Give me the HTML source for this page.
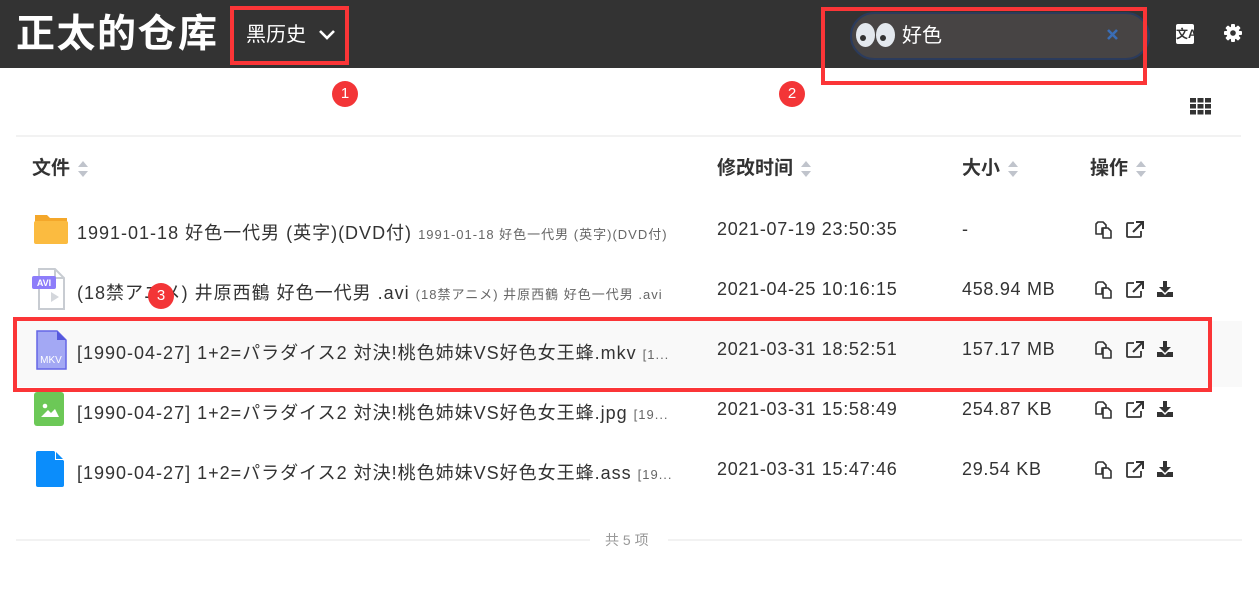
<!DOCTYPE html>
<html><head><meta charset="utf-8"><style>
*{margin:0;padding:0;box-sizing:border-box}
body{width:1259px;height:594px;background:#fff;font-family:"Liberation Sans","Noto Sans CJK SC",sans-serif;position:relative;overflow:hidden;color:#333}
.a{position:absolute;white-space:nowrap}
.hdr{position:absolute;left:0;top:0;width:1259px;height:68px;background:#333}
.red{position:absolute;border:4px solid #fb3537}
.badge{position:absolute;width:26px;height:26px;border-radius:50%;background:#f33537;color:#fff;font-size:15px;text-align:center;line-height:26px}
.th{font-size:19px;font-weight:bold;color:#333}
.sort{display:inline-block;vertical-align:middle;margin-left:8px;width:10px;height:18px;position:relative}
.sort:before{content:"";position:absolute;top:1px;left:0;border:5px solid transparent;border-bottom:6px solid #c0c4cc;border-top:0}
.sort:after{content:"";position:absolute;bottom:1px;left:0;border:5px solid transparent;border-top:6px solid #c0c4cc;border-bottom:0}
.nm{font-size:18px;color:#333;letter-spacing:1px}
.nm small{font-size:13px;color:#666;letter-spacing:1px}
.dt,.sz{font-size:18px;color:#333;letter-spacing:0.7px}
</style></head><body>
<div class="hdr"></div>
<div class="a" style="left:16px;top:12px;font-size:39px;font-weight:bold;color:#fff;line-height:46px;letter-spacing:1.5px">正太的仓库</div>
<div class="a" style="left:246px;top:22px;font-size:20px;color:#fff;line-height:26px">黑历史</div>
<svg class="a" style="left:318px;top:28px" width="18" height="14" viewBox="0 0 18 14"><path d="M2 3 L9 10 L16 3" stroke="#fff" stroke-width="2.6" fill="none"/></svg>
<div class="red" style="left:230px;top:6px;width:119px;height:59px"></div>

<div class="a" style="left:850px;top:12px;width:300px;height:48px;border-radius:24px;background:#474444;border:2px solid #2b3b5c"></div>
<div class="a" style="left:856px;top:23px;width:19px;height:24px;border-radius:50%;background:#e3e8ee"></div>
<div class="a" style="left:876px;top:23px;width:19px;height:24px;border-radius:50%;background:#e3e8ee"></div>
<div class="a" style="left:860px;top:35px;width:6px;height:6px;border-radius:50%;background:#333"></div>
<div class="a" style="left:880px;top:35px;width:6px;height:6px;border-radius:50%;background:#333"></div>
<div class="a" style="left:902px;top:23px;font-size:20px;color:#fff;line-height:26px">好色</div>
<svg class="a" style="left:1106px;top:28px" width="13" height="13" viewBox="0 0 13 13"><path d="M2 2L11 11M11 2L2 11" stroke="#3a6db5" stroke-width="2.6"/></svg>
<div class="red" style="left:821px;top:7px;width:326px;height:78px"></div>
<div class="a" style="left:1176px;top:24px;width:18px;height:20px;background:#fff;border-radius:2px;font-size:12px;font-weight:bold;color:#333;text-align:center;line-height:20px">文A</div>
<svg class="a" style="left:1223px;top:23px" width="20" height="20" viewBox="0 0 20 20"><g fill="#fff"><circle cx="10" cy="10" r="6.5"/><rect x="8" y="1" width="4" height="18" rx="1"/><rect x="1" y="8" width="18" height="4" rx="1"/><rect x="8" y="1" width="4" height="18" rx="1" transform="rotate(45 10 10)"/><rect x="8" y="1" width="4" height="18" rx="1" transform="rotate(-45 10 10)"/></g><circle cx="10" cy="10" r="2.8" fill="#333"/></svg>

<div class="badge" style="left:332px;top:81px">1</div>
<div class="badge" style="left:779px;top:81px">2</div>
<svg class="a" style="left:1190px;top:98px" width="21" height="17" viewBox="0 0 21 17"><g fill="#333"><rect x="0" y="0" width="6" height="4.5"/><rect x="7.5" y="0" width="6" height="4.5"/><rect x="15" y="0" width="6" height="4.5"/><rect x="0" y="6" width="6" height="4.5"/><rect x="7.5" y="6" width="6" height="4.5"/><rect x="15" y="6" width="6" height="4.5"/><rect x="0" y="12" width="6" height="4.5"/><rect x="7.5" y="12" width="6" height="4.5"/><rect x="15" y="12" width="6" height="4.5"/></g></svg>

<div class="a" style="left:16px;top:135px;width:1225px;height:2px;background:#f2f2f2"></div>
<div class="a th" style="left:32px;top:153px">文件<span class="sort"></span></div>
<div class="a th" style="left:717px;top:153px">修改时间<span class="sort"></span></div>
<div class="a th" style="left:962px;top:153px">大小<span class="sort"></span></div>
<div class="a th" style="left:1090px;top:153px">操作<span class="sort"></span></div>

<div class="a" style="left:13px;top:321px;width:1229px;height:66px;background:#f9f9f9"></div>

<svg class="a" style="left:33px;top:213px" width="36" height="32" viewBox="0 0 36 32"><path d="M2 2h12l3 3h17v25H2z" fill="#f4a72a"/><rect x="1" y="8" width="34" height="23" rx="2" fill="#fbbb40"/></svg>
<svg class="a" style="left:30px;top:268px" width="36" height="42" viewBox="0 0 36 42"><path d="M9 1h16l9 9v31H9z" fill="#fff" stroke="#c8ccd2" stroke-width="2"/><path d="M25 1v9h9" fill="none" stroke="#c8ccd2" stroke-width="2"/><path d="M21 24v10l8-5z" fill="#d4d7dc"/><rect x="2" y="8" width="24" height="13" rx="2" fill="#8d7dfa"/><text x="14" y="18" font-size="9" font-family="Liberation Sans" font-weight="bold" fill="#fff" text-anchor="middle">AVI</text></svg>
<svg class="a" style="left:35px;top:330px" width="32" height="40" viewBox="0 0 32 40"><path d="M2 1h20l9 9v29H2z" fill="#a3a8f4" stroke="#6466e6" stroke-width="1.5"/><path d="M22 1v9h9z" fill="#5558dd"/><text x="16" y="33" font-size="10" font-family="Liberation Sans" fill="#fff" text-anchor="middle">MKV</text></svg>
<svg class="a" style="left:33px;top:391px" width="32" height="36" viewBox="0 0 32 36"><rect x="1" y="1" width="30" height="34" rx="3" fill="#6cc857"/><circle cx="12" cy="15" r="2.3" fill="#fff"/><path d="M8 26l7-7 3 3 4-4 4 8z" fill="#fff"/></svg>
<svg class="a" style="left:35px;top:450px" width="30" height="38" viewBox="0 0 30 38"><path d="M3 1h16l10 10v24a2 2 0 0 1-2 2H3a2 2 0 0 1-2-2V3a2 2 0 0 1 2-2z" fill="#0b8dfb"/><path d="M20 1v9h9z" fill="#fff"/><path d="M21 2v7h7z" fill="#0b8dfb"/></svg>

<div class="a nm" style="left:77px;top:219px">1991-01-18 好色一代男 (英字)(DVD付) <small>1991-01-18 好色一代男 (英字)(DVD付)</small></div>
<div class="a nm" style="left:77px;top:279px">(18禁アニメ) 井原西鶴 好色一代男 .avi <small>(18禁アニメ) 井原西鶴 好色一代男 .avi</small></div>
<div class="a nm" style="left:77px;top:339px">[1990-04-27] 1+2=パラダイス2 対決!桃色姉妹VS好色女王蜂.mkv <small>[1...</small></div>
<div class="a nm" style="left:77px;top:399px">[1990-04-27] 1+2=パラダイス2 対決!桃色姉妹VS好色女王蜂.jpg <small>[19...</small></div>
<div class="a nm" style="left:77px;top:459px">[1990-04-27] 1+2=パラダイス2 対決!桃色姉妹VS好色女王蜂.ass <small>[19...</small></div>

<div class="a dt" style="left:717px;top:219px">2021-07-19 23:50:35</div>
<div class="a dt" style="left:717px;top:279px">2021-04-25 10:16:15</div>
<div class="a dt" style="left:717px;top:339px">2021-03-31 18:52:51</div>
<div class="a dt" style="left:717px;top:399px">2021-03-31 15:58:49</div>
<div class="a dt" style="left:717px;top:459px">2021-03-31 15:47:46</div>

<div class="a sz" style="left:962px;top:219px">-</div>
<div class="a sz" style="left:962px;top:279px">458.94 MB</div>
<div class="a sz" style="left:962px;top:339px">157.17 MB</div>
<div class="a sz" style="left:962px;top:399px">254.87 KB</div>
<div class="a sz" style="left:962px;top:459px">29.54 KB</div>

<svg width="0" height="0" style="position:absolute"><defs>
<g id="cp"><path d="M3 2h5l3 3v3H7v6H1V4z" fill="none" stroke="#333" stroke-width="1.6" stroke-linejoin="round"/><path d="M8 8h5l3 3v7H8z" fill="none" stroke="#333" stroke-width="1.6" stroke-linejoin="round"/></g>
<g id="op"><path d="M9 3H3a1 1 0 0 0-1 1v12a1 1 0 0 0 1 1h12a1 1 0 0 0 1-1v-5" fill="none" stroke="#333" stroke-width="1.8"/><path d="M8 12L17 3M11 2h7v7" fill="none" stroke="#333" stroke-width="2"/></g>
<g id="dl"><rect x="7" y="1" width="4" height="7" fill="#333"/><path d="M3 7h12l-6 6z" fill="#333"/><path d="M1 12h5l3 3 3-3h5v5H1z" fill="#333"/></g>
</defs></svg>
<svg class="a" style="left:1095px;top:220px" width="90" height="20"><use href="#cp" x="0"/><use href="#op" x="30"/></svg>
<svg class="a" style="left:1095px;top:280px" width="90" height="20"><use href="#cp" x="0"/><use href="#op" x="30"/><use href="#dl" x="61"/></svg>
<svg class="a" style="left:1095px;top:340px" width="90" height="20"><use href="#cp" x="0"/><use href="#op" x="30"/><use href="#dl" x="61"/></svg>
<svg class="a" style="left:1095px;top:400px" width="90" height="20"><use href="#cp" x="0"/><use href="#op" x="30"/><use href="#dl" x="61"/></svg>
<svg class="a" style="left:1095px;top:460px" width="90" height="20"><use href="#cp" x="0"/><use href="#op" x="30"/><use href="#dl" x="61"/></svg>

<div class="red" style="left:13px;top:317px;width:1199px;height:75px"></div>
<div class="badge" style="left:148px;top:283px">3</div>

<div class="a" style="left:16px;top:539px;width:574px;height:2px;background:#f2f2f2"></div>
<div class="a" style="left:668px;top:539px;width:574px;height:2px;background:#f2f2f2"></div>
<div class="a" style="left:605px;top:530px;font-size:14px;color:#999">共 5 项</div>
</body></html>
